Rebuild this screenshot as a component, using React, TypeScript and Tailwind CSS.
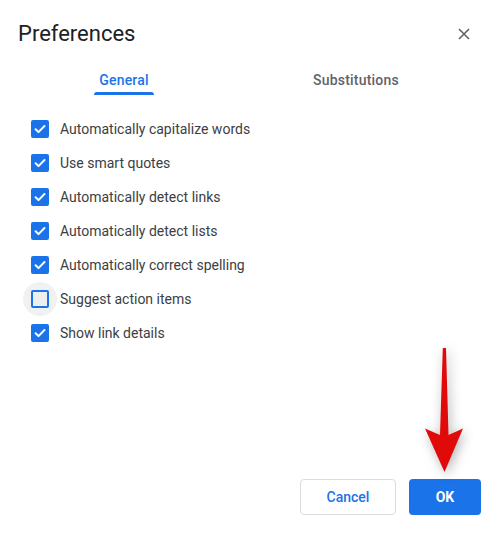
import { useState } from 'react';

const options = [
  { label: 'Automatically capitalize words', checked: true },
  { label: 'Use smart quotes', checked: true },
  { label: 'Automatically detect links', checked: true },
  { label: 'Automatically detect lists', checked: true },
  { label: 'Automatically correct spelling', checked: true },
  { label: 'Suggest action items', checked: false, hover: true },
  { label: 'Show link details', checked: true },
];

function CheckBox({ checked, hover }: { checked: boolean; hover?: boolean }) {
  return (
    <span className="relative flex h-[18px] w-[18px] items-center justify-center">
      {hover ? <span className="absolute -inset-[8px] rounded-full bg-[#f1f1f1]" /> : null}
      {checked ? (
        <span className="relative flex h-[18px] w-[18px] items-center justify-center rounded-[2px] bg-[#1a73e8]">
          <svg width="14" height="14" viewBox="0 0 14 14" fill="none">
            <path d="M2.6 7.3 5.5 10.1 11.5 4" stroke="white" strokeWidth="2" strokeLinecap="round" strokeLinejoin="round" />
          </svg>
        </span>
      ) : (
        <span className="relative h-[18px] w-[18px] rounded-[2px] border-2 border-[#1a73e8] bg-[#eeeeee]" />
      )}
    </span>
  );
}

export default function App() {
  const [tab, setTab] = useState('general');

  return (
    <div className="relative flex h-[535px] w-[502px] flex-col bg-white font-['Roboto',sans-serif] text-[#3c4043]">
      {/* header */}
      <div className="mt-[20px] flex h-[28px] items-center justify-between pl-[18px] pr-[30px]">
        <h1 className="text-[22px] leading-[28px] text-[#202124]">Preferences</h1>
        <button className="flex h-4 w-4 items-center justify-center">
          <svg width="12" height="12" viewBox="0 0 12 12">
            <path d="M1 1 11 11M11 1 1 11" stroke="#5f6368" strokeWidth="1.6" />
          </svg>
        </button>
      </div>

      {/* tabs */}
      <div className="mx-[8px] mt-[17px] grid w-[464px] grid-cols-2">
        {[
          ['general', 'General'],
          ['subs', 'Substitutions'],
        ].map(([key, label]) => (
          <button
            key={key}
            onClick={() => setTab(key)}
            className={`relative flex h-[30px] items-center justify-center text-[14px] font-medium tracking-[0.2px] ${
              tab === key ? 'text-[#1a73e8]' : 'text-[#5f6368]'
            }`}
          >
            {label}
            {tab === key ? (
              <span className="absolute bottom-0 left-1/2 h-[3px] w-[60px] -translate-x-1/2 rounded-t-[3px] bg-[#1a73e8]" />
            ) : null}
          </button>
        ))}
      </div>

      {/* options */}
      <ul className="mt-[17px] flex flex-col">
        {options.map((o) => (
          <li key={o.label} className="flex h-[34px] items-center pl-[31px]">
            <CheckBox checked={o.checked} hover={o.hover} />
            <span className="ml-[11px] text-[14px] text-[#3c4043]">{o.label}</span>
          </li>
        ))}
      </ul>

      {/* footer */}
      <div className="mt-auto mb-[20px] flex justify-end gap-[13px] pr-[21px]">
        <button className="h-[36px] w-[96px] rounded-[4px] border border-[#dadce0] text-[14px] font-medium text-[#1a73e8]">
          Cancel
        </button>
        <button className="h-[36px] w-[72px] rounded-[4px] bg-[#1a73e8] text-[14px] font-bold text-white">
          OK
        </button>
      </div>

      {/* annotation arrow */}
      <svg
        className="pointer-events-none absolute left-[415px] top-[340px] drop-shadow-[2px_3px_6px_rgba(0,0,0,0.3)]"
        width="60"
        height="140"
        viewBox="415 340 60 140"
      >
        <polygon
          points="442.8,348 446,348 448.5,435 463,428.5 444.5,472 425,428.5 440,435"
          fill="#e00a0a"
        />
      </svg>
    </div>
  );
}
